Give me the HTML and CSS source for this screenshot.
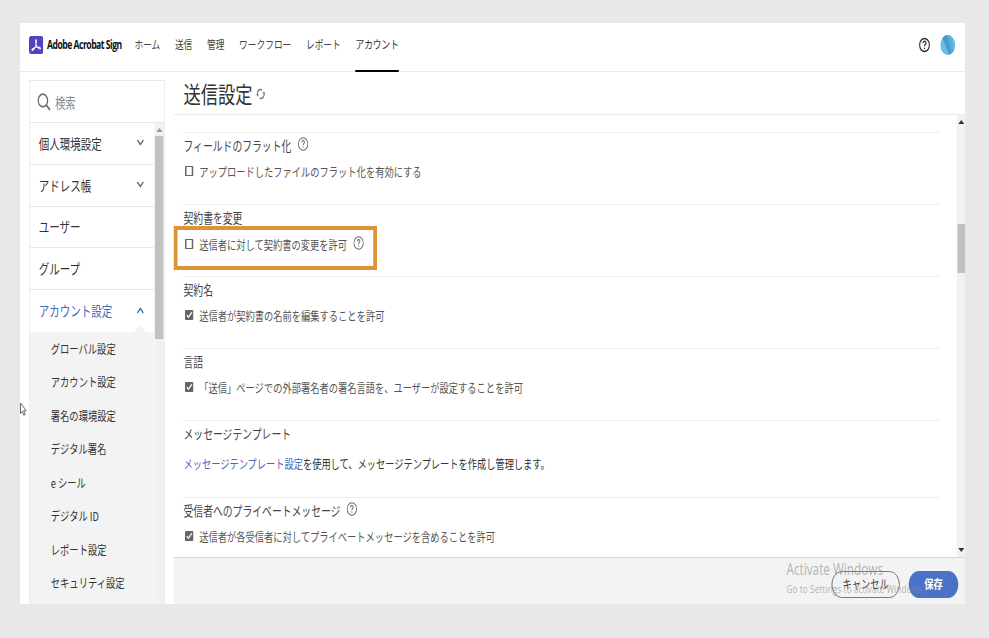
FILE: index.html
```
<!DOCTYPE html>
<html lang="ja">
<head>
    <meta charset="UTF-8">
    <meta name="viewport" content="width=device-width, initial-scale=1.0">
    <title>送信設定 - Adobe Acrobat Sign</title>
    <link rel="stylesheet" href="styles.css">
</head>
<body>

    <div class="screen">
    <div class="app">
        <header class="header">
            <svg class="logo" viewBox="0 0 19 18" preserveAspectRatio="none">
                <rect width="19" height="18" rx="3" fill="#5044c4"/>
                <path d="M4 14.2c-1.200-1.200 4.200-3.200 7.200-3.200 2.600 0 4.500.8 4.200 1.700-.7 1.300-4.500-1.300-5.700-3.700-1-2-1.400-5.200-.3-5.200 1.400 0 .3 4.700-1.200 7.200-1.300 2.300-3.200 4-4.200 3.200z" fill="none" stroke="#fff" stroke-width="1.100"/>
            </svg>
            <span class="brand">Adobe Acrobat Sign</span>
            <nav class="nav">
                <a>ホーム</a>
                <a>送信</a>
                <a>管理</a>
                <a>ワークフロー</a>
                <a>レポート</a>
                <a class="active">アカウント</a>
            </nav>
            <svg class="help-top" viewBox="0 0 16 16">
                <circle cx="8" cy="8" r="6.500" fill="none" stroke="#333" stroke-width="1.500"/>
                <path d="M5.900 6.300q.1-2 2.100-2t2.100 1.700q0 1-1.200 1.700-.9.6-.9 1.500" fill="none" stroke="#333" stroke-width="1.500"/>
                <circle cx="8" cy="11.300" r=".9" fill="#333"/>
            </svg>
            <svg class="avatar" viewBox="0 0 20 20">
                <circle cx="10" cy="10" r="10" fill="#68bce9"/>
                <path d="M9 .1L15.500 18.300 12 19.800 3 3A10 10 0 0 1 9 .1z" fill="#4a9acb"/>
                <path d="M9 .1A10 10 0 0 1 14 .9L18 16 15.500 18.300z" fill="#57addc"/>
            </svg>
        </header>

        <div class="body">
            <aside class="sidebar">
                <div class="search">
                    <svg viewBox="0 0 18 18"><circle cx="7.500" cy="7.500" r="6.300" fill="none" stroke="#6e6e6e" stroke-width="1.800"/><path d="M12 12l5 5" stroke="#6e6e6e" stroke-width="2.200"/></svg>
                    <span>検索</span>
                </div>
                <div class="menu-area">
                    <div class="menu">
                        <div class="menu-item">個人環境設定<svg class="chev" viewBox="0 0 10 7"><path d="M1 1l4 4.500L9 1"/></svg></div>
                        <div class="menu-item">アドレス帳<svg class="chev" viewBox="0 0 10 7"><path d="M1 1l4 4.500L9 1"/></svg></div>
                        <div class="menu-item">ユーザー</div>
                        <div class="menu-item">グループ</div>
                        <div class="menu-item open">アカウント設定<svg class="chev" viewBox="0 0 10 7"><path d="M1 6l4-4.500L9 6"/></svg></div>
                        <div class="submenu">
                            <a>グローバル設定</a>
                            <a>アカウント設定</a>
                            <a>署名の環境設定</a>
                            <a>デジタル署名</a>
                            <a>e シール</a>
                            <a>デジタル ID</a>
                            <a>レポート設定</a>
                            <a>セキュリティ設定</a>
                        </div>
                    </div>
                    <div class="side-scroll">
                        <div class="arrow-up"></div>
                        <div class="side-thumb"></div>
                    </div>
                </div>
            </aside>

            <main class="main">
                <div class="title">
                    <h1>送信設定</h1>
                    <svg viewBox="0 0 14 14" preserveAspectRatio="none"><path d="M1.800 8.500A5.300 5.300 0 0 1 9 2.200M12.200 5.500A5.300 5.300 0 0 1 5 11.800" fill="none" stroke="#777" stroke-width="1.600"/><path d="M0 7.200h4.200L2.200 10.200zM14 6.800H9.800L11.800 3.800z" fill="#777"/></svg>
                </div>

                <div class="content">
                    <div class="settings">
                        <section class="setting">
                            <h2>フィールドのフラット化<svg class="help" viewBox="0 0 16 16"><use href="#q"/></svg></h2>
                            <label class="row"><span class="check"></span>アップロードしたファイルのフラット化を有効にする</label>
                        </section>
                        <section class="setting marked">
                            <h2>契約書を変更</h2>
                            <label class="row"><span class="check"></span>送信者に対して契約書の変更を許可<svg class="help" viewBox="0 0 16 16"><use href="#q"/></svg></label>
                            <div class="highlight"></div>
                        </section>
                        <section class="setting">
                            <h2>契約名</h2>
                            <label class="row"><span class="check on"><svg viewBox="0 0 12 10"><path d="M2.500 5l2.500 2.500L10 2"/></svg></span>送信者が契約書の名前を編集することを許可</label>
                        </section>
                        <section class="setting">
                            <h2>言語</h2>
                            <label class="row"><span class="check on"><svg viewBox="0 0 12 10"><path d="M2.500 5l2.500 2.500L10 2"/></svg></span>「送信」ページでの外部署名者の署名言語を、ユーザーが設定することを許可</label>
                        </section>
                        <section class="setting template">
                            <h2>メッセージテンプレート</h2>
                            <p class="row"><a class="link">メッセージテンプレート設定</a>を使用して、メッセージテンプレートを作成し管理します。</p>
                        </section>
                        <section class="setting last">
                            <h2>受信者へのプライベートメッセージ<svg class="help" viewBox="0 0 16 16"><use href="#q"/></svg></h2>
                            <label class="row"><span class="check on"><svg viewBox="0 0 12 10"><path d="M2.500 5l2.500 2.500L10 2"/></svg></span>送信者が各受信者に対してプライベートメッセージを含めることを許可</label>
                        </section>
                    </div>
                    <div class="main-scroll">
                        <div class="arrow-up dark"></div>
                        <div class="main-thumb"></div>
                        <div class="arrow-down"></div>
                    </div>
                </div>

                <footer class="footer">
                    <button class="btn">キャンセル</button>
                    <button class="btn save">保存</button>
                    <div class="watermark">
                        <div class="wm-title">Activate Windows</div>
                        <div class="wm-text">Go to Settings to activate Windows.</div>
                    </div>
                </footer>
            </main>
        </div>

        <svg class="cursor" viewBox="0 0 9 14" preserveAspectRatio="none"><path d="M.7 1v10.500l2.600-2.200 1.800 4 1.700-.8-1.800-3.800h3.300z" fill="#fff" stroke="#444" stroke-width=".9"/></svg>
    </div>
    </div>

    <svg class="defs">
        <symbol id="q" viewBox="0 0 16 16">
            <circle cx="8" cy="8" r="7.200" fill="none" stroke="#666" stroke-width="1.300"/>
            <path d="M6 6.200q.1-2 2-2t2 1.700q0 1-1.100 1.700-.9.6-.9 1.700" fill="none" stroke="#666" stroke-width="1.300"/>
            <circle cx="8" cy="11.400" r=".8" fill="#666"/>
        </symbol>
    </svg>

</body>
</html>
```
FILE: styles.css
```
* {
    box-sizing: border-box;
}

body {
    margin: 0;
    height: 638px;
    padding: 23px 0 0 20px;
    background: #e8e8e8;
    overflow: hidden;
    font-family: "Noto Sans CJK JP", sans-serif;
    color: #444;
}

.screen {
    width: 945px;
    height: 581px;
    overflow: hidden;
}

/* narrow display: everything is laid out 1260px wide and condensed to 945px */
.app {
    position: relative;
    width: 1260px;
    height: 581px;
    background: #fff;
    transform: scaleX(0.75);
    transform-origin: 0 0;
    display: flex;
    flex-direction: column;
    white-space: nowrap;
}

.defs {
    position: absolute;
    width: 0;
    height: 0;
}

.header {
    height: 49px;
    flex: none;
    display: flex;
    align-items: center;
    padding: 0 13px 5px 12px;
    border-bottom: 1px solid #ebebeb;
}

.logo {
    width: 19px;
    height: 18px;
    margin-right: 5px;
}

.brand {
    width: 116.500px;
    font-family: "Open Sans", sans-serif;
    font-size: 11.500px;
    font-weight: 700;
    letter-spacing: -0.67px;
    color: #111;
}

.nav {
    display: flex;
    flex: 1;
    gap: 19.600px;
    font-size: 11.600px;
    align-self: stretch;
}

.nav a {
    height: 49px;
    line-height: 43px;
}

.nav .active {
    border-bottom: 2px solid #000;
    color: #333;
}

.help-top {
    width: 16px;
    height: 16px;
    margin-right: 13px;
}

.avatar {
    width: 20px;
    height: 20px;
}

.body {
    flex: 1;
    min-height: 0;
    display: flex;
}

.sidebar {
    width: 181px;
    margin: 8px 12px 0;
    display: flex;
    flex-direction: column;
    border: 1px solid #e9e9e9;
    border-bottom: 0;
}

.search {
    height: 42px;
    flex: none;
    display: flex;
    align-items: center;
    gap: 6px;
    padding: 1px 0 0 10px;
    font-size: 13.500px;
    color: #888;
    border-bottom: 1px solid #e9e9e9;
}

.search svg {
    width: 18px;
    height: 18px;
}

.menu-area {
    flex: 1;
    min-height: 0;
    display: flex;
}

.menu {
    flex: 1;
    display: flex;
    flex-direction: column;
}

.menu-item {
    height: 41.800px;
    flex: none;
    display: flex;
    align-items: center;
    justify-content: space-between;
    padding: 0 13px 1px 12px;
    font-size: 14px;
    color: #333;
    border-bottom: 1px solid #e9e9e9;
}

.chev {
    width: 11px;
    height: 7px;
    fill: none;
    stroke: #666;
    stroke-width: 1.700;
}

.menu-item.open {
    position: relative;
    padding-bottom: 2px;
    color: #4069b8;
    border-bottom: 0;
}

.open .chev {
    stroke: #4069b8;
}

.menu-item.open::after {
    content: "";
    position: absolute;
    right: 10px;
    bottom: 0;
    border: 9px solid transparent;
    border-top: 0;
    border-bottom: 7px solid #f3f3f3;
}

.submenu {
    flex: 1;
    padding-top: 1px;
    background: #f3f3f3;
    display: flex;
    flex-direction: column;
}

.submenu a {
    height: 33.500px;
    line-height: 33.500px;
    padding-left: 28px;
    font-size: 12.400px;
    color: #333;
}

.side-scroll {
    width: 13px;
    background: #f1f1f1;
    display: flex;
    flex-direction: column;
    align-items: center;
}

.arrow-up {
    margin: 5px 0 4px;
    border: 4px solid transparent;
    border-top: 0;
    border-bottom: 4px solid #999;
}

.arrow-up.dark {
    margin-bottom: 100px;
    border-bottom-color: #333;
}

.side-thumb {
    width: 11px;
    height: 203px;
    background: #c1c1c1;
}

.main {
    flex: 1;
    min-width: 0;
    display: flex;
    flex-direction: column;
}

.title {
    height: 43px;
    flex: none;
    display: flex;
    align-items: center;
    gap: 5px;
    padding-left: 13px;
    border-bottom: 1px solid #ebebeb;
}

.title h1 {
    margin: 0;
    font-size: 23px;
    font-weight: 400;
    line-height: 40px;
    color: #333;
}

.title svg {
    width: 12px;
    height: 12px;
    margin-top: 2px;
}

.content {
    flex: 1;
    min-height: 0;
    display: flex;
}

.settings {
    flex: 1;
    padding: 17px 24px 0 13px;
}

.setting {
    height: 72px;
    border-top: 1px solid #ededed;
}

.setting h2 {
    margin: 0;
    height: 25px;
    display: flex;
    align-items: center;
    font-size: 13.100px;
    font-weight: 400;
    color: #444;
}

.row {
    margin: 4px 0 0;
    height: 20px;
    display: flex;
    align-items: center;
    font-size: 12.350px;
    color: #555;
}

.help {
    width: 15px;
    height: 14px;
    margin: -4px 0 0 8px;
}

.check {
    width: 11px;
    height: 10px;
    margin: -2px 8px 0 2px;
    border: 1px solid #666;
    border-width: 1px 2px;
    border-radius: 1px;
}

.check.on {
    display: flex;
    border: 0;
    background: #666;
}

.check svg {
    width: 11px;
    height: 10px;
    fill: none;
    stroke: #fff;
    stroke-width: 1.500;
}

.marked {
    position: relative;
}

.marked .row {
    margin-top: 5px;
}

/* callout around the option */
.highlight {
    position: absolute;
    left: -13px;
    top: 21px;
    width: 271px;
    height: 44px;
    border: solid #df9337;
    border-width: 4px 5px;
}

.template {
    height: 77px;
}

.template .row {
    margin-top: 8px;
    font-size: 12.300px;
    color: #333;
}

.link {
    color: #4069b8;
}

.main-scroll {
    width: 11px;
    background: #f1f1f1;
    display: flex;
    flex-direction: column;
    align-items: center;
}

.main-thumb {
    width: 10px;
    height: 49px;
    background: #c1c1c1;
}

.arrow-down {
    margin: auto 0 5px;
    border: 4px solid transparent;
    border-bottom: 0;
    border-top: 4px solid #333;
}

.footer {
    position: relative;
    height: 47px;
    flex: none;
    display: flex;
    align-items: center;
    justify-content: flex-end;
    gap: 12px;
    padding: 6px 9px 0 0;
    background: #f3f3f3;
    border-top: 1px solid #d8d8d8;
}

.btn {
    width: 91px;
    height: 27px;
    padding: 0;
    border: 1.500px solid #666;
    border-radius: 14px;
    background: none;
    font-family: inherit;
    font-size: 12.400px;
    color: #444;
}

.btn.save {
    width: 66px;
    border: 0;
    background: #4a72c8;
    color: #fff;
    font-weight: 700;
}

.watermark {
    position: absolute;
    left: 817px;
    top: 1px;
    font-family: "Open Sans", sans-serif;
    color: rgba(140, 140, 140, 0.65);
}

.wm-title {
    font-size: 15.700px;
    line-height: 20px;
}

.wm-text {
    font-size: 10.800px;
    letter-spacing: 0.2px;
    line-height: 20px;
}

.cursor {
    position: absolute;
    left: 0;
    top: 379px;
    width: 9px;
    height: 14px;
}
```
